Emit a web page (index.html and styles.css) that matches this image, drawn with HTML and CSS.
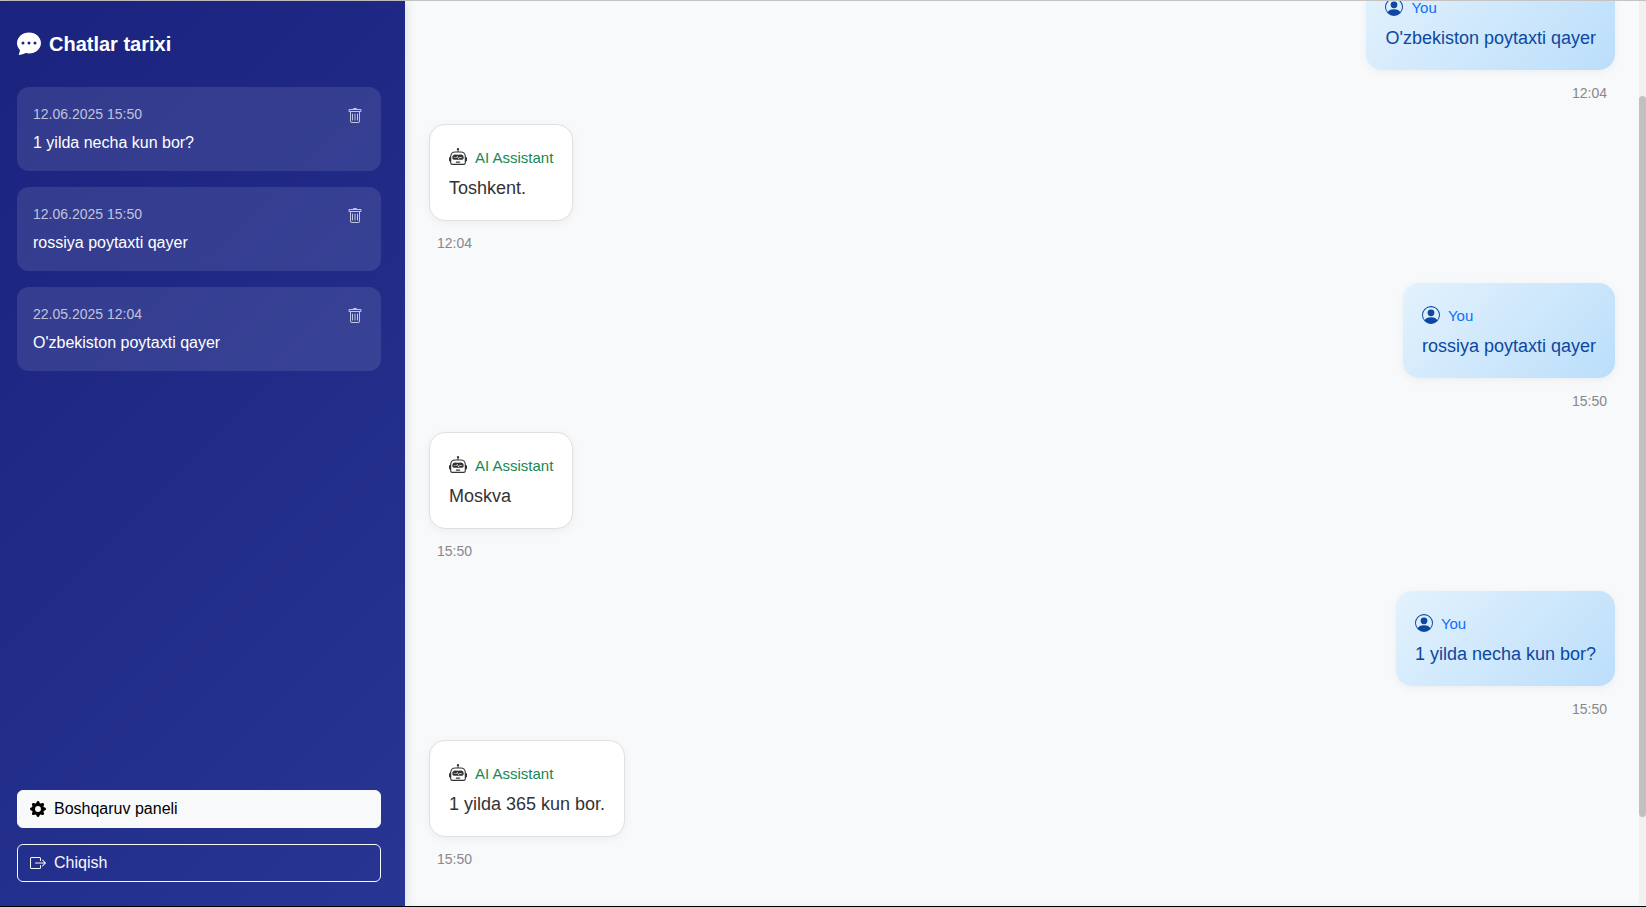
FILE: index.html
```html
<!DOCTYPE html>
<html lang="uz">
<head>
<meta charset="utf-8">
<meta name="viewport" content="width=device-width, initial-scale=1">
<title>Chatlar tarixi</title>
<link rel="stylesheet" href="styles.css">
</head>
<body>
<svg class="sprite" aria-hidden="true">
  <symbol id="i-chat" viewBox="0 0 16 16"><path d="M16 8c0 3.866-3.582 7-8 7a9 9 0 0 1-2.347-.306c-.584.296-1.925.864-4.181 1.234-.2.032-.352-.176-.273-.362.354-.836.674-1.95.77-2.966C.744 11.37 0 9.76 0 8c0-3.866 3.582-7 8-7s8 3.134 8 7M5 8a1 1 0 1 0-2 0 1 1 0 0 0 2 0m4 0a1 1 0 1 0-2 0 1 1 0 0 0 2 0m3 1a1 1 0 1 0 0-2 1 1 0 0 0 0 2"/></symbol>
  <symbol id="i-trash" viewBox="0 0 16 16"><path d="M5.5 5.5A.5.5 0 0 1 6 6v6a.5.5 0 0 1-1 0V6a.5.5 0 0 1 .5-.5m2.5 0a.5.5 0 0 1 .5.5v6a.5.5 0 0 1-1 0V6a.5.5 0 0 1 .5-.5m3 .5a.5.5 0 0 0-1 0v6a.5.5 0 0 0 1 0z"/><path d="M14.5 3a1 1 0 0 1-1 1H13v9a2 2 0 0 1-2 2H5a2 2 0 0 1-2-2V4h-.5a1 1 0 0 1-1-1V2a1 1 0 0 1 1-1H6a1 1 0 0 1 1-1h2a1 1 0 0 1 1 1h3.5a1 1 0 0 1 1 1zM4.118 4 4 4.059V13a1 1 0 0 0 1 1h6a1 1 0 0 0 1-1V4.059L11.882 4zM2.5 3h11V2h-11z"/></symbol>
  <symbol id="i-gear" viewBox="0 0 16 16"><path d="M9.405 1.05c-.413-1.4-2.397-1.4-2.81 0l-.1.34a1.464 1.464 0 0 1-2.105.872l-.31-.17c-1.283-.698-2.686.705-1.987 1.987l.169.311c.446.82.023 1.841-.872 2.105l-.34.1c-1.4.413-1.4 2.397 0 2.81l.34.1a1.464 1.464 0 0 1 .872 2.105l-.17.31c-.698 1.283.705 2.686 1.987 1.987l.311-.169a1.464 1.464 0 0 1 2.105.872l.1.34c.413 1.4 2.397 1.4 2.81 0l.1-.34a1.464 1.464 0 0 1 2.105-.872l.31.17c1.283.698 2.686-.705 1.987-1.987l-.169-.311a1.464 1.464 0 0 1 .872-2.105l.34-.1c1.4-.413 1.4-2.397 0-2.81l-.34-.1a1.464 1.464 0 0 1-.872-2.105l.17-.31c.698-1.283-.705-2.686-1.987-1.987l-.311.169a1.464 1.464 0 0 1-2.105-.872zM8 10.93a2.929 2.929 0 1 1 0-5.86 2.929 2.929 0 0 1 0 5.858z"/></symbol>
  <symbol id="i-exit" viewBox="0 0 16 16"><path d="M10 12.5a.5.5 0 0 1-.5.5h-8a.5.5 0 0 1-.5-.5v-9a.5.5 0 0 1 .5-.5h8a.5.5 0 0 1 .5.5v2a.5.5 0 0 0 1 0v-2A1.5 1.5 0 0 0 9.5 2h-8A1.5 1.5 0 0 0 0 3.5v9A1.5 1.5 0 0 0 1.5 14h8a1.5 1.5 0 0 0 1.5-1.5v-2a.5.5 0 0 0-1 0z"/><path d="M15.854 8.354a.5.5 0 0 0 0-.708l-3-3a.5.5 0 0 0-.708.708L14.293 7.5H5.5a.5.5 0 0 0 0 1h8.793l-2.147 2.146a.5.5 0 0 0 .708.708z"/></symbol>
  <symbol id="i-person" viewBox="0 0 16 16"><path d="M11 6a3 3 0 1 1-6 0 3 3 0 0 1 6 0"/><path fill-rule="evenodd" d="M0 8a8 8 0 1 1 16 0A8 8 0 0 1 0 8m8-7a7 7 0 0 0-5.468 11.37C3.242 11.226 4.805 10 8 10s4.757 1.225 5.468 2.37A7 7 0 0 0 8 1"/></symbol>
  <symbol id="i-robot" viewBox="0 0 16 16"><path d="M6 12.5a.5.5 0 0 1 .5-.5h3a.5.5 0 0 1 0 1h-3a.5.5 0 0 1-.5-.5M3 8.062C3 6.76 4.235 5.765 5.53 5.886a26.6 26.6 0 0 0 4.94 0C11.765 5.765 13 6.76 13 8.062v1.157a.93.93 0 0 1-.765.935c-.845.147-2.34.346-4.235.346s-3.39-.2-4.235-.346A.93.93 0 0 1 3 9.219zm4.542-.827a.25.25 0 0 0-.217.068l-.92.9a25 25 0 0 1-1.871-.183.25.25 0 0 0-.068.495c.55.076 1.232.149 2.02.193a.25.25 0 0 0 .189-.071l.754-.736.847 1.71a.25.25 0 0 0 .404.062l.932-.97a25 25 0 0 0 1.922-.188.25.25 0 0 0-.068-.495c-.538.074-1.207.145-1.98.189a.25.25 0 0 0-.166.076l-.754.785-.842-1.7a.25.25 0 0 0-.182-.135"/><path d="M8.5 1.866a1 1 0 1 0-1 0V3h-2A4.5 4.5 0 0 0 1 7.5V8a1 1 0 0 0-1 1v2a1 1 0 0 0 1 1v1a2 2 0 0 0 2 2h10a2 2 0 0 0 2-2v-1a1 1 0 0 0 1-1V9a1 1 0 0 0-1-1v-.5A4.5 4.5 0 0 0 10.5 3h-2zM14 7.5V13a1 1 0 0 1-1 1H3a1 1 0 0 1-1-1V7.5A3.5 3.5 0 0 1 5.5 4h5A3.5 3.5 0 0 1 14 7.5"/></symbol>
</svg>
<div class="app">
  <aside class="sidebar">
    <h1 class="title"><svg class="icon icon-lg"><use href="#i-chat"/></svg>Chatlar tarixi</h1>
    <ul class="history">
      <li class="card">
        <a class="card-link" href="#m3"><span class="date">12.06.2025 15:50</span><span class="topic">1 yilda necha kun bor?</span></a>
        <button class="delete" type="button" aria-label="O'chirish"><svg class="icon"><use href="#i-trash"/></svg></button>
      </li>
      <li class="card">
        <a class="card-link" href="#m2"><span class="date">12.06.2025 15:50</span><span class="topic">rossiya poytaxti qayer</span></a>
        <button class="delete" type="button" aria-label="O'chirish"><svg class="icon"><use href="#i-trash"/></svg></button>
      </li>
      <li class="card">
        <a class="card-link" href="#m1"><span class="date">22.05.2025 12:04</span><span class="topic">O'zbekiston poytaxti qayer</span></a>
        <button class="delete" type="button" aria-label="O'chirish"><svg class="icon"><use href="#i-trash"/></svg></button>
      </li>
    </ul>
    <nav class="actions">
      <a class="btn btn-light" href="#panel"><svg class="icon"><use href="#i-gear"/></svg>Boshqaruv paneli</a>
      <a class="btn btn-outline" href="#logout"><svg class="icon"><use href="#i-exit"/></svg>Chiqish</a>
    </nav>
  </aside>
  <main class="chat">
    <div class="messages">
      <article class="message user" id="m1">
        <div class="bubble"><div class="author"><svg class="icon icon-md"><use href="#i-person"/></svg><span class="name">You</span></div><p class="text">O'zbekiston poytaxti qayer</p></div>
        <time class="time">12:04</time>
      </article>
      <article class="message ai">
        <div class="bubble"><div class="author"><svg class="icon icon-md"><use href="#i-robot"/></svg><span class="name">AI Assistant</span></div><p class="text">Toshkent.</p></div>
        <time class="time">12:04</time>
      </article>
      <article class="message user" id="m2">
        <div class="bubble"><div class="author"><svg class="icon icon-md"><use href="#i-person"/></svg><span class="name">You</span></div><p class="text">rossiya poytaxti qayer</p></div>
        <time class="time">15:50</time>
      </article>
      <article class="message ai">
        <div class="bubble"><div class="author"><svg class="icon icon-md"><use href="#i-robot"/></svg><span class="name">AI Assistant</span></div><p class="text">Moskva</p></div>
        <time class="time">15:50</time>
      </article>
      <article class="message user" id="m3">
        <div class="bubble"><div class="author"><svg class="icon icon-md"><use href="#i-person"/></svg><span class="name">You</span></div><p class="text">1 yilda necha kun bor?</p></div>
        <time class="time">15:50</time>
      </article>
      <article class="message ai">
        <div class="bubble"><div class="author"><svg class="icon icon-md"><use href="#i-robot"/></svg><span class="name">AI Assistant</span></div><p class="text">1 yilda 365 kun bor.</p></div>
        <time class="time">15:50</time>
      </article>
    </div>
    <div class="scrollbar" aria-hidden="true"><div class="thumb"></div></div>
  </main>
</div>
</body>
</html>
```
FILE: styles.css
```css
*, *::before, *::after { box-sizing: border-box; }
body {
  margin: 0;
  font-family: "Liberation Sans", Arial, sans-serif;
  font-size: 16px;
  line-height: 24px;
  color: #333;
  background: #f8f9fa;
}
a { color: inherit; text-decoration: none; }
.sprite { display: none; }
.icon { width: 16px; height: 16px; flex: none; fill: currentColor; display: block; }
.icon-md { width: 18px; height: 18px; margin-bottom: 2px; }
.icon-lg { width: 24px; height: 24px; margin-bottom: 2px; }

.app {
  display: flex;
  height: 100vh;
  border-top: 1px solid #c4c4c4;
  border-bottom: 1px solid #000;
}

/* Sidebar */
.sidebar {
  flex: 0 0 405px;
  display: flex;
  flex-direction: column;
  gap: 24px;
  padding: 24px 24px 24px 17px;
  color: #fff;
  background: linear-gradient(135deg, #1a237e, #283593);
  box-shadow: 2px 0 10px rgba(0, 0, 0, 0.1);
  z-index: 1;
}
.title {
  display: flex;
  align-items: center;
  gap: 8px;
  height: 38px;
  margin: 0;
  font-size: 20px;
  font-weight: 700;
}
.history {
  flex: 1;
  display: flex;
  flex-direction: column;
  gap: 16px;
  margin: 0;
  padding: 0;
  list-style: none;
}
.card {
  display: flex;
  align-items: flex-start;
  padding: 16px;
  border-radius: 12px;
  background: rgba(255, 255, 255, 0.1);
}
.card-link { flex: 1; display: flex; flex-direction: column; gap: 6px; }
.date { font-size: 14px; line-height: 22px; color: rgba(255, 255, 255, 0.7); }
.delete {
  margin: 0;
  padding: 5px 2px 0 0;
  border: 0;
  background: none;
  color: rgba(255, 255, 255, 0.7);
  cursor: pointer;
}
.actions { display: flex; flex-direction: column; gap: 16px; }
.btn {
  display: flex;
  align-items: center;
  gap: 8px;
  padding: 6px 12px;
  border: 1px solid #f8f9fa;
  border-radius: 6px;
}
.btn-light { color: #000; background: #f8f9fa; }
.btn-outline { color: #f8f9fa; }

/* Conversation */
.chat { flex: 1; display: flex; min-width: 0; }
.messages {
  flex: 1;
  display: flex;
  flex-direction: column;
  justify-content: flex-end;
  padding: 0 24px 37px;
  overflow: hidden;
  box-shadow: inset 0 -8px 10px -8px rgba(0, 0, 0, 0.05);
}
.message { flex: none; display: flex; flex-direction: column; align-items: flex-start; }
.message.user { align-items: flex-end; margin-bottom: 21px; }
.message.ai { margin-bottom: 30px; }
.message:last-child { margin-bottom: 0; }
.bubble { border-radius: 16px; box-shadow: 0 2px 8px rgba(0, 0, 0, 0.05); }
.user .bubble {
  padding: 18px 19px 17px;
  color: #0d47a1;
  background: linear-gradient(135deg, #e3f2fd, #bbdefb);
}
.ai .bubble {
  padding: 18px 19px 17px;
  border: 1px solid #e0e0e0;
  background: #fff;
}
.author { display: flex; align-items: center; gap: 8px; height: 30px; font-size: 15px; }
.user .name { color: #0d6efd; }
.ai .name { color: #198754; }
.text { margin: 1px 0 0; font-size: 18px; line-height: 29px; }
.time { margin: 13px 8px 0; font-size: 14px; line-height: 20px; color: #888; }
.ai .time { margin-top: 12px; }

.scrollbar { flex: none; width: 7px; padding-top: 95px; background: #f1f1f1; }
.thumb { height: 89%; border-radius: 4px; background: #c1c1c1; }
```
